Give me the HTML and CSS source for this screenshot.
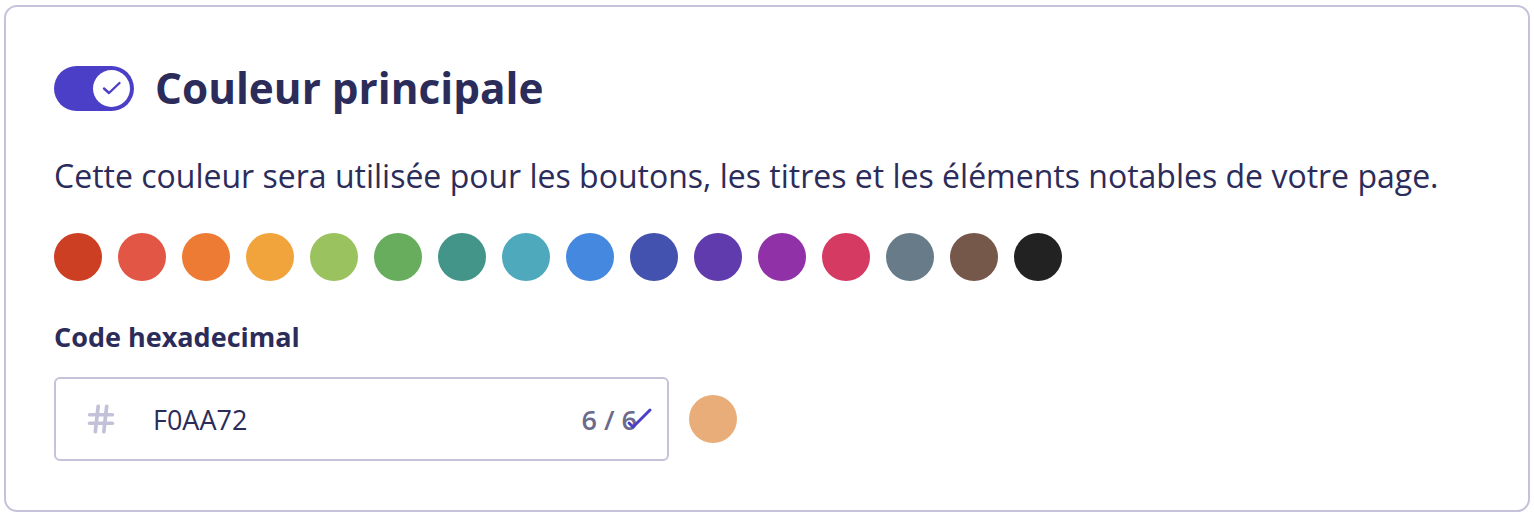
FILE: index.html
```html
<!DOCTYPE html>
<html lang="fr">
<head>
<meta charset="utf-8">
<link rel="stylesheet" href="styles.css">
</head>
<body>
<section class="card">
  <div class="header">
    <span class="toggle">
      <span class="knob">
        <svg width="24" height="24" viewBox="0 0 24 24"><path d="M4 12.5l5 4.5L19.5 7" fill="none" stroke="#4a3fc6" stroke-width="2.4" stroke-linecap="round" stroke-linejoin="round"/></svg>
      </span>
    </span>
    <h2 class="title">Couleur principale</h2>
  </div>
  <p class="desc">Cette couleur sera utilisée pour les boutons, les titres et les éléments notables de votre page.</p>
  <div class="swatches">
    <span class="sw" style="background:#cc3f22"></span>
    <span class="sw" style="background:#e25645"></span>
    <span class="sw" style="background:#ee7b33"></span>
    <span class="sw" style="background:#f2a43c"></span>
    <span class="sw" style="background:#9ac25e"></span>
    <span class="sw" style="background:#68ad5e"></span>
    <span class="sw" style="background:#429588"></span>
    <span class="sw" style="background:#4ea9bd"></span>
    <span class="sw" style="background:#4588df"></span>
    <span class="sw" style="background:#4351af"></span>
    <span class="sw" style="background:#603bad"></span>
    <span class="sw" style="background:#9131a8"></span>
    <span class="sw" style="background:#d53a63"></span>
    <span class="sw" style="background:#677c88"></span>
    <span class="sw" style="background:#76584b"></span>
    <span class="sw" style="background:#222222"></span>
  </div>
  <label class="label">Code hexadecimal</label>
  <div class="row">
    <div class="input">
      <svg class="hash" width="34" height="34" viewBox="0 0 24 24" fill="none" stroke="#c3c1d8" stroke-width="2.6" stroke-linecap="round" stroke-linejoin="round"><line x1="4" y1="9" x2="20" y2="9"/><line x1="4" y1="15" x2="20" y2="15"/><line x1="10" y1="3" x2="8" y2="21"/><line x1="16" y1="3" x2="14" y2="21"/></svg>
      <span class="value">F0AA72</span>
      <span class="count">6 / 6<svg class="check" width="30" height="30" viewBox="0 0 30 30"><path d="M4 22l4 4L25 9" fill="none" stroke="#4a3fc6" stroke-width="3" stroke-linecap="round" stroke-linejoin="round"/></svg></span>
    </div>
    <span class="preview"></span>
  </div>
</section>
</body>
</html>
```
FILE: styles.css
```css
* { box-sizing: border-box; }
body {
  margin: 0;
  background: #ffffff;
  font-family: "Open Sans", "Noto Sans", sans-serif;
  color: #2c2c5a;
}
.card {
  margin: 5px 4px 0 4px;
  height: 507px;
  border: 2px solid #c5c3dc;
  border-radius: 13px;
  padding: 55px 48px 0 48px;
}
.header {
  display: flex;
  align-items: center;
  gap: 21px;
}
.toggle {
  width: 80px;
  height: 45px;
  border-radius: 23px;
  background: #4a3fc6;
  display: flex;
  align-items: center;
  justify-content: flex-end;
  padding: 4px;
}
.knob {
  width: 37px;
  height: 37px;
  border-radius: 50%;
  background: #ffffff;
  display: flex;
  align-items: center;
  justify-content: center;
}
.title {
  margin: 0;
  font-size: 42.3px;
  font-weight: 700;
  line-height: 52px;
  color: #2c2c5a;
}
.desc {
  margin: 40px 0 0 0;
  font-size: 32px;
  line-height: 44px;
  color: #2c2c5a;
}
.swatches {
  display: flex;
  gap: 16px;
  margin-top: 35px;
}
.sw {
  width: 48px;
  height: 48px;
  border-radius: 50%;
}
.label {
  display: block;
  margin-top: 38px;
  font-size: 27px;
  font-weight: 700;
  line-height: 36px;
  color: #2c2c5a;
}
.row {
  display: flex;
  align-items: center;
  gap: 20px;
  margin-top: 22px;
}
.input {
  width: 615px;
  height: 84px;
  border: 2px solid #c5c3dc;
  border-radius: 6px;
  display: flex;
  align-items: center;
  padding: 0 20px 0 28px;
}
.hash {
  flex: none;
  margin-right: 35px;
}
.value {
  font-size: 27px;
  color: #2c2c5a;
  flex: 1;
}
.count {
  position: relative;
  font-size: 27px;
  font-weight: 600;
  color: #6b6a8c;
  margin-right: 10px;
}
.check {
  position: absolute;
  right: -18px;
  top: 0;
}
.preview {
  width: 48px;
  height: 48px;
  border-radius: 50%;
  background: #e8ad78;
}
```
